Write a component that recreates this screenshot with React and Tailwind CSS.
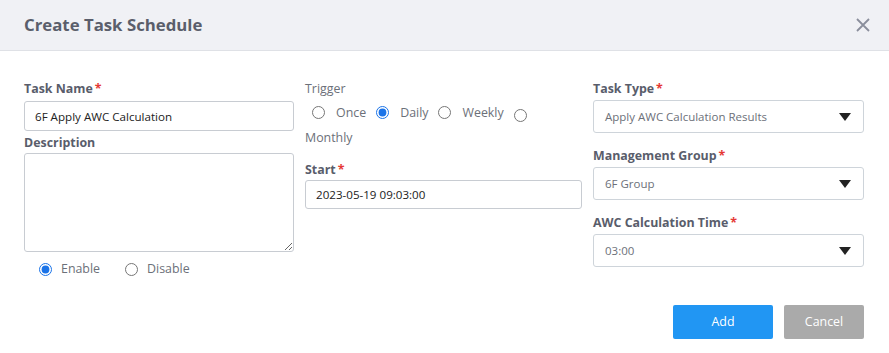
import { useState } from "react"

const font = { fontFamily: '"Open Sans", "Noto Sans", sans-serif' }

function Label({ children, required }) {
    return (
        <div className="text-[12.4px] font-bold text-[#595d6b] leading-[18px]">
            {children}
            {required && <span className="text-[#e53935] ml-[2px]">*</span>}
        </div>
    )
}

function Select({ value }) {
    return (
        <div className="mt-[2px] h-[33px] border border-[#ced4da] rounded-[3px] flex items-center justify-between pl-[11px] pr-[12px] bg-white">
            <span className="text-[11.5px] text-[#6c7079]">{value}</span>
            <svg width="12" height="8" viewBox="0 0 12 8"><path d="M0 0 L12 0 L6 8 Z" fill="#222" /></svg>
        </div>
    )
}

function Radio({ name, label, checked, onChange, gap = "gap-[11px]", className = "" }) {
    return (
        <label className={`inline-flex items-center ${gap} ${className} cursor-pointer`}>
            <input type="radio" name={name} checked={checked} onChange={onChange} className="m-0 w-[13px] h-[13px] accent-[#1a73e8]" />
            <span>{label}</span>
        </label>
    )
}

export default function App() {
    const [trigger, setTrigger] = useState("daily")
    const [enabled, setEnabled] = useState(true)

    return (
        <div className="w-[889px] h-[353px] bg-white" style={font}>
            <div className="h-[51px] bg-[#f0f1f5] border-b border-[#dfe1e6] flex items-center justify-between pl-[24px] pr-[19px]">
                <div className="text-[16.8px] font-bold text-[#5a5e6b]">Create Task Schedule</div>
                <svg width="14" height="14" viewBox="0 0 14 14"><path d="M1 1 L13 13 M13 1 L1 13" stroke="#8a8e9c" strokeWidth="1.8" /></svg>
            </div>

            <div className="grid grid-cols-[270px_277px_271px] gap-x-[11px] pl-[24px] pt-[29px]">
                <div>
                    <Label required>Task Name</Label>
                    <input
                        className="mt-[3px] w-full h-[30px] border border-[#c8ccd2] rounded-[3px] px-[10px] text-[11.6px] text-[#222] outline-none"
                        defaultValue="6F Apply AWC Calculation"
                    />
                    <div className="mt-[3px]"><Label>Description</Label></div>
                    <textarea className="mt-[1px] w-full h-[99px] border border-[#c8ccd2] rounded-[3px] px-[10px] py-[6px] text-[12px] outline-none block" />
                    <div className="flex items-center pl-[15px] mt-[8px] text-[12.4px] text-[#6c7079] leading-[18px]">
                        <Radio name="en" label="Enable" gap="gap-[9px]" className="mr-[25px]" checked={enabled} onChange={() => setEnabled(true)} />
                        <Radio name="en" label="Disable" gap="gap-[9px]" checked={!enabled} onChange={() => setEnabled(false)} />
                    </div>
                </div>

                <div>
                    <div className="text-[12.4px] text-[#6c7079] leading-[18px]">Trigger</div>
                    <div className="mt-[3px] text-[12.4px] text-[#6c7079] leading-[23px] pl-[7px]">
                        <Radio name="tr" label="Once" className="mr-[10px]" checked={trigger === "once"} onChange={() => setTrigger("once")} />
                        <Radio name="tr" label="Daily" className="mr-[10px]" checked={trigger === "daily"} onChange={() => setTrigger("daily")} />
                        <Radio name="tr" label="Weekly" className="mr-[10px]" checked={trigger === "weekly"} onChange={() => setTrigger("weekly")} />
                        <input type="radio" name="tr" checked={trigger === "monthly"} onChange={() => setTrigger("monthly")} className="m-0 w-[13px] h-[13px] accent-[#1a73e8] align-middle" />
                        <span className="block -ml-[7px]">Monthly</span>
                    </div>
                    <div className="mt-[12px]"><Label required>Start</Label></div>
                    <input
                        className="mt-[1px] w-full h-[29px] border border-[#c8ccd2] rounded-[3px] px-[10px] text-[11.6px] text-[#222] outline-none"
                        defaultValue="2023-05-19 09:03:00"
                    />
                </div>

                <div>
                    <Label required>Task Type</Label>
                    <Select value="Apply AWC Calculation Results" />
                    <div className="mt-[14px]"><Label required>Management Group</Label></div>
                    <Select value="6F Group" />
                    <div className="mt-[14px]"><Label required>AWC Calculation Time</Label></div>
                    <Select value="03:00" />
                </div>
            </div>

            <div className="flex justify-end gap-[11px] pr-[25px] mt-[27px]">
                <button className="w-[100px] h-[34px] bg-[#2196f3] text-white text-[12.4px] rounded-[2px]">Add</button>
                <button className="w-[80px] h-[34px] bg-[#aaaaaa] text-white text-[12.4px] rounded-[2px]">Cancel</button>
            </div>
        </div>
    )
}
